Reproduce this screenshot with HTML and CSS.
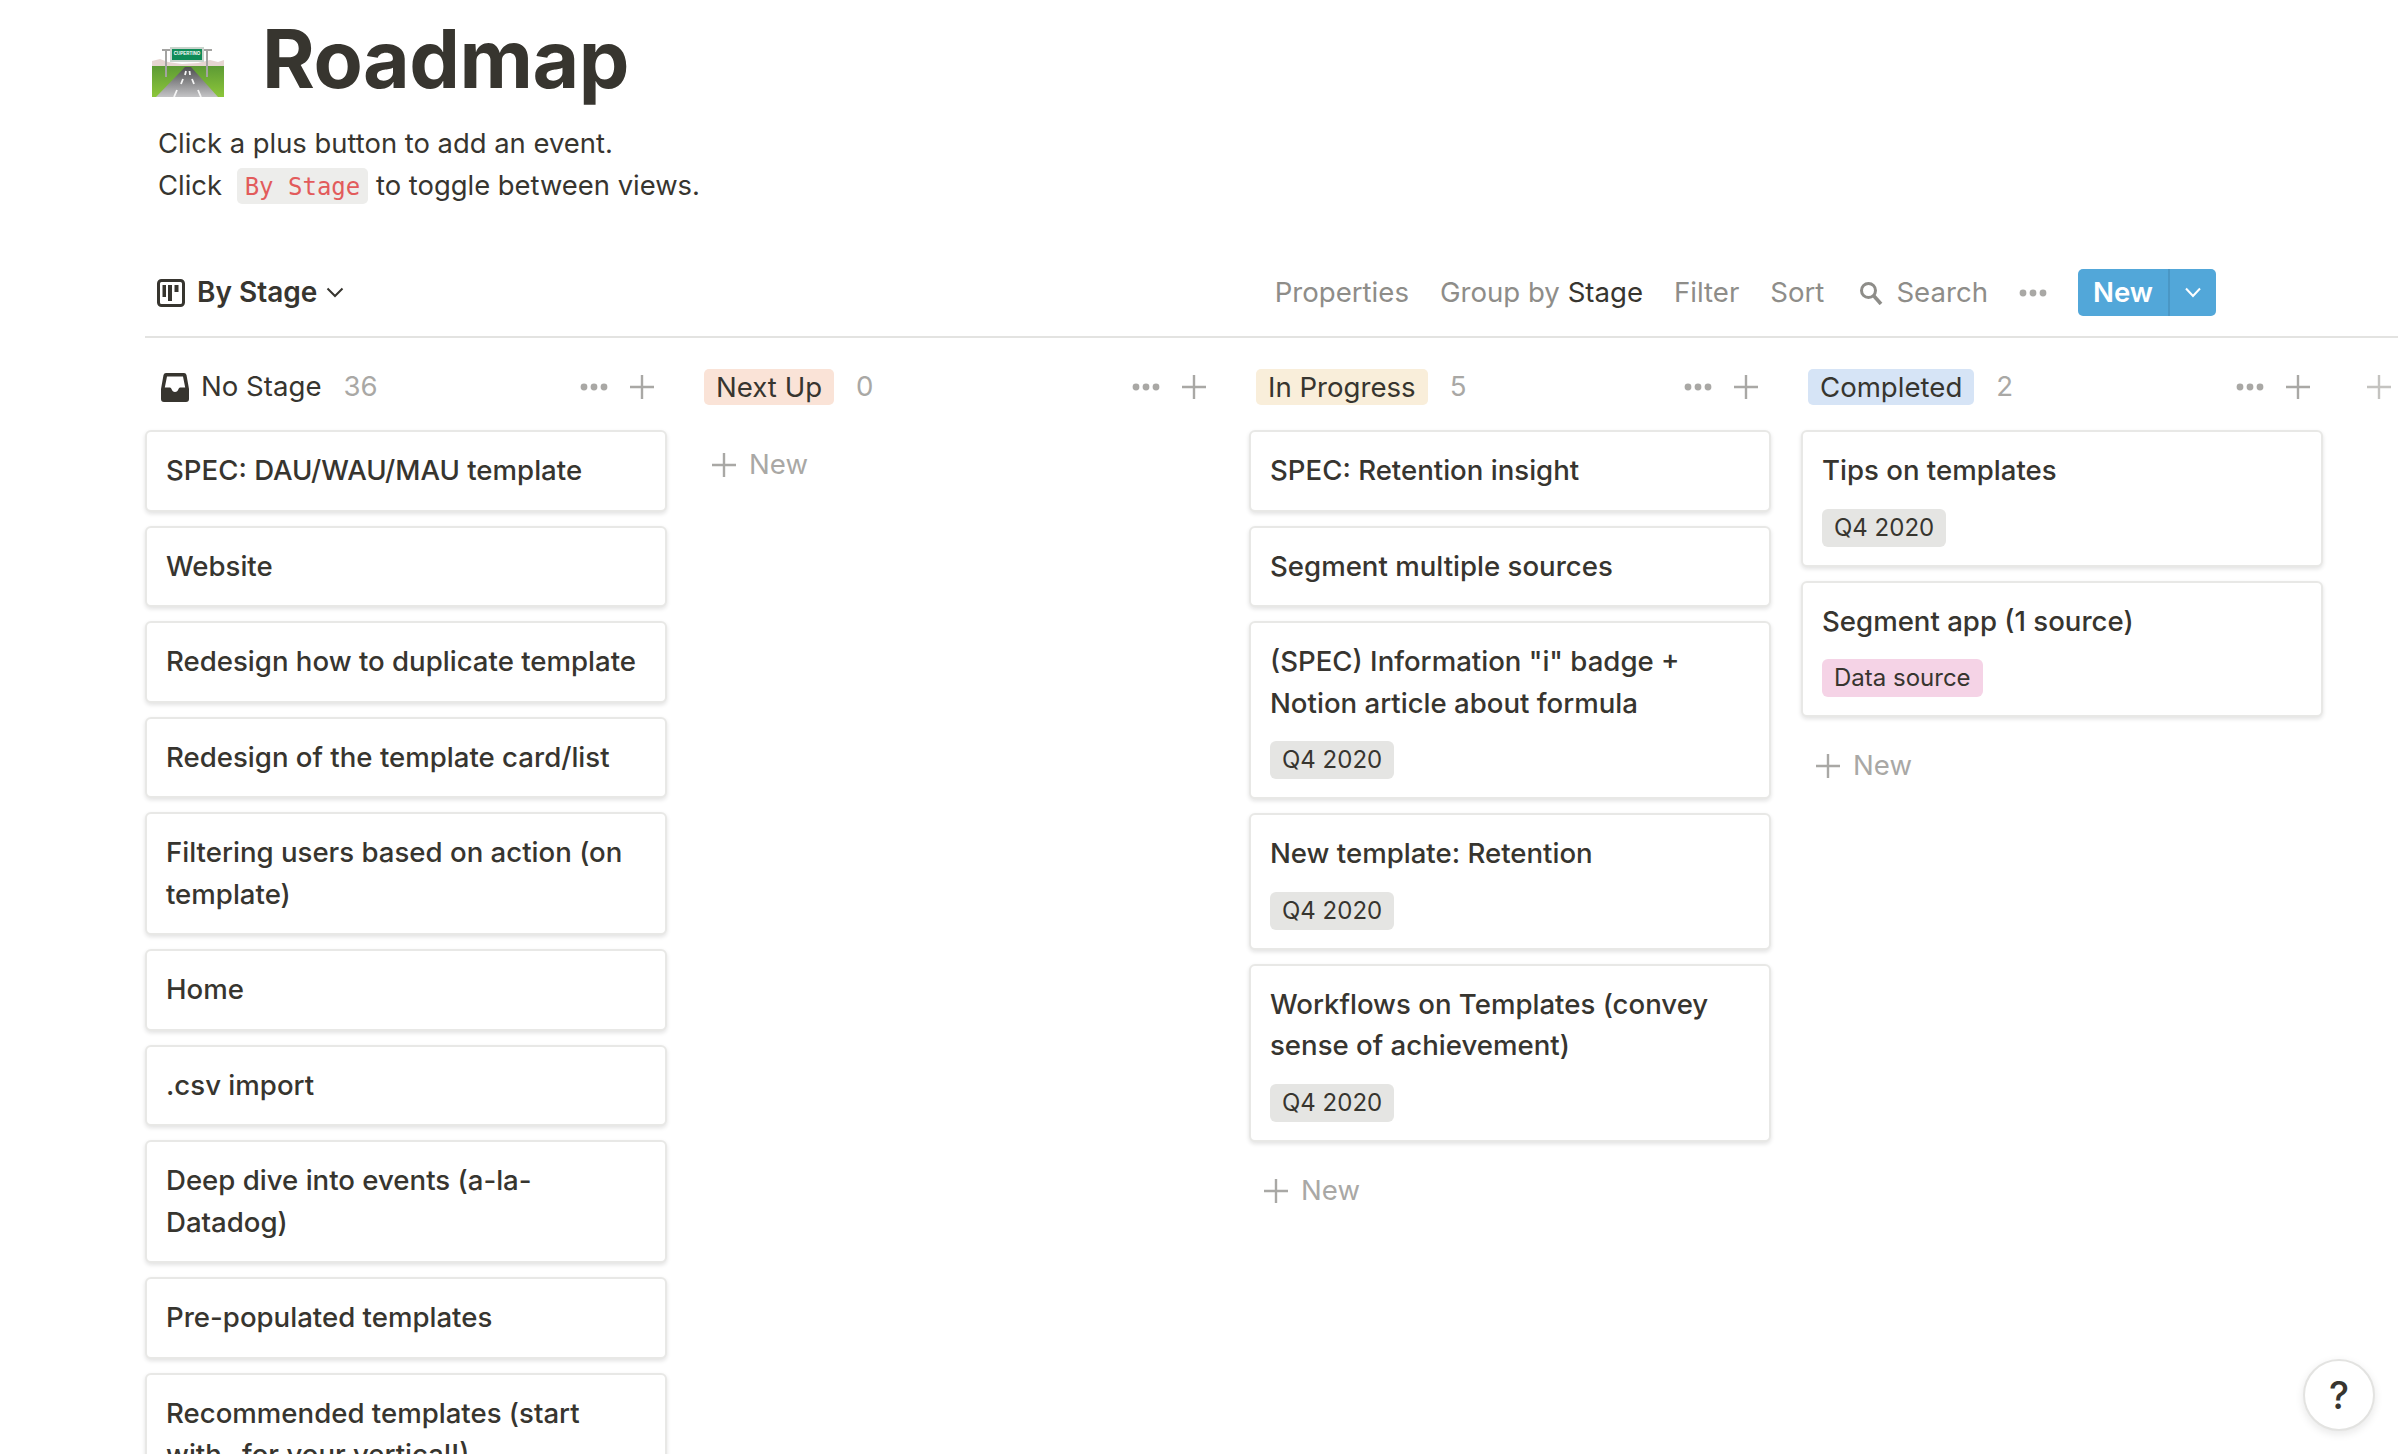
FILE: index.html
```html
<!DOCTYPE html>
<html lang="en">
<head>
    <meta charset="UTF-8">
    <title>Roadmap</title>
    <link rel="stylesheet" href="styles.css">
</head>
<body>
    <svg class="defs" width="0" height="0">
        <symbol id="dots" viewBox="0 0 28 8"><circle cx="4" cy="4" r="3.4"/><circle cx="14" cy="4" r="3.4"/><circle cx="24" cy="4" r="3.4"/></symbol>
        <symbol id="plus" viewBox="0 0 24 24"><path d="M0 12H24M12 0V24" fill="none" stroke="currentColor" stroke-width="2.4"/></symbol>
    </svg>

    <div class="page">
        <header class="title-row">
            <svg class="road-icon" viewBox="0 0 72 50">
                <defs>
                    <linearGradient id="roadFade" x1="0" y1="0" x2="0" y2="1">
                        <stop offset="0" stop-color="#4d4d4f"/>
                        <stop offset="1" stop-color="#c4c4c6"/>
                    </linearGradient>
                    <linearGradient id="grassFade" x1="0" y1="0" x2="0" y2="1">
                        <stop offset="0" stop-color="#5d9a34"/>
                        <stop offset="1" stop-color="#8cc63a"/>
                    </linearGradient>
                </defs>
                <path d="M0 14L8 12 16 15 30 17 46 16 58 13 66 15 72 13V20H0Z" fill="#e6d5d1"/>
                <rect x="0" y="19" width="72" height="31" fill="url(#grassFade)"/>
                <path d="M14 2V30M55 2V30M10 3H60" fill="none" stroke="#a3a3a1" stroke-width="2"/>
                <path d="M4 50L33 20H39L66 50Z" fill="url(#roadFade)"/>
                <path d="M22 50L25 43M29 37L31 32M33 28L34 24M49 50L46 43M42 37L40 32M38 28L37.500 24" stroke="#f5f5f5" stroke-width="1.800"/>
                <rect x="18" y="0" width="34" height="15" fill="#c9d4cc"/>
                <rect x="20" y="2" width="30" height="11" fill="#0f8c58"/>
                <text x="35" y="7.500" class="sign-text">CUPERTINO</text>
            </svg>
            <h1>Roadmap</h1>
        </header>

        <div class="intro">
            <div>Click a plus button to add an event.</div>
            <div>Click <code>By Stage</code> to toggle between views.</div>
        </div>

        <div class="toolbar">
            <div class="view-name">
                <svg class="board-icon" viewBox="0 0 28 28">
                    <rect x="1.500" y="1.500" width="25" height="25" rx="3" fill="none" stroke="currentColor" stroke-width="3"/>
                    <path d="M5.500 6H9V18H5.500ZM11 6H15V22H11ZM17.500 6H21.500V13H17.500Z" fill="currentColor"/>
                </svg>
                <span>By Stage</span>
                <svg class="chev" viewBox="0 0 18 11"><path d="M1.500 1.500L9 9 16.500 1.500" fill="none" stroke="currentColor" stroke-width="2"/></svg>
            </div>
            <div class="tools">
                <span>Properties</span>
                <span>Group by <b>Stage</b></span>
                <span>Filter</span>
                <span>Sort</span>
                <span class="search">
                    <svg viewBox="0 0 24 24"><circle cx="9.500" cy="9.500" r="7" fill="none" stroke="currentColor" stroke-width="3"/><path d="M14.500 14.500L22 23" stroke="currentColor" stroke-width="3.600"/></svg>
                    Search
                </span>
                <svg class="dots tool-dots"><use href="#dots"/></svg>
                <div class="new-btn">
                    <span class="new-label">New</span>
                    <span class="new-arrow"><svg viewBox="0 0 18 11"><path d="M2 1.500L9 9 16 1.500" fill="none" stroke="currentColor" stroke-width="2"/></svg></span>
                </div>
            </div>
        </div>

        <div class="board">
            <section class="column">
                <div class="col-head">
                    <svg class="tray" viewBox="0 0 28 30"><path d="M5 1H23Q25 1 25.500 3L28 17V27Q28 30 25 30H3Q0 30 0 27V17L2.500 3Q3 1 5 1ZM6 4.500L3.800 15.500H9Q10 15.500 10.500 17 11.500 20 14 20 16.500 20 17.500 17 18 15.500 19 15.500H24.200L22 4.500Z" fill="#37352f" fill-rule="evenodd"/></svg>
                    <span class="plain-name">No Stage</span>
                    <span class="count">36</span>
                    <span class="head-actions"><svg class="dots"><use href="#dots"/></svg><svg class="plus"><use href="#plus"/></svg></span>
                </div>
                <div class="card"><div class="card-title">SPEC: DAU/WAU/MAU template</div></div>
                <div class="card"><div class="card-title">Website</div></div>
                <div class="card"><div class="card-title">Redesign how to duplicate template</div></div>
                <div class="card"><div class="card-title">Redesign of the template card/list</div></div>
                <div class="card"><div class="card-title">Filtering users based on action (on template)</div></div>
                <div class="card"><div class="card-title">Home</div></div>
                <div class="card"><div class="card-title">.csv import</div></div>
                <div class="card"><div class="card-title">Deep dive into events (a-la-<br>Datadog)</div></div>
                <div class="card"><div class="card-title">Pre-populated templates</div></div>
                <div class="card"><div class="card-title">Recommended templates (start<br>with _for your vertical!)</div></div>
            </section>

            <section class="column">
                <div class="col-head">
                    <span class="pill pill-orange">Next Up</span>
                    <span class="count">0</span>
                    <span class="head-actions"><svg class="dots"><use href="#dots"/></svg><svg class="plus"><use href="#plus"/></svg></span>
                </div>
                <div class="add-new first"><svg class="plus"><use href="#plus"/></svg>New</div>
            </section>

            <section class="column">
                <div class="col-head">
                    <span class="pill pill-yellow">In Progress</span>
                    <span class="count">5</span>
                    <span class="head-actions"><svg class="dots"><use href="#dots"/></svg><svg class="plus"><use href="#plus"/></svg></span>
                </div>
                <div class="card"><div class="card-title">SPEC: Retention insight</div></div>
                <div class="card"><div class="card-title">Segment multiple sources</div></div>
                <div class="card"><div class="card-title">(SPEC) Information "i" badge + Notion article about formula</div><span class="tag">Q4 2020</span></div>
                <div class="card"><div class="card-title">New template: Retention</div><span class="tag">Q4 2020</span></div>
                <div class="card"><div class="card-title">Workflows on Templates (convey sense of achievement)</div><span class="tag">Q4 2020</span></div>
                <div class="add-new"><svg class="plus"><use href="#plus"/></svg>New</div>
            </section>

            <section class="column">
                <div class="col-head">
                    <span class="pill pill-blue">Completed</span>
                    <span class="count">2</span>
                    <span class="head-actions"><svg class="dots"><use href="#dots"/></svg><svg class="plus"><use href="#plus"/></svg></span>
                </div>
                <div class="card"><div class="card-title">Tips on templates</div><span class="tag">Q4 2020</span></div>
                <div class="card"><div class="card-title">Segment app (1 source)</div><span class="tag tag-pink">Data source</span></div>
                <div class="add-new"><svg class="plus"><use href="#plus"/></svg>New</div>
            </section>

            <div class="add-group"><svg class="plus"><use href="#plus"/></svg></div>
        </div>
    </div>

    <div class="help">?</div>
</body>
</html>
```

FILE: styles.css
```css
html, body {
    height: 100%;
    margin: 0;
    overflow: hidden;
}
body {
    background: #fff;
    color: #37352f;
    font-family: Inter, "Liberation Sans", sans-serif;
    font-size: 27.6px;
    line-height: 41.5px;
}
.defs {
    position: absolute;
}
.page {
    padding-left: 145px;
    height: 1454px;
    overflow: hidden;
}

/* title */
.title-row {
    display: flex;
    align-items: flex-start;
    height: 122px;
}
.road-icon {
    width: 72px;
    height: 50px;
    margin: 47px 0 0 7px;
    flex: none;
}
.sign-text {
    font-size: 4.500px;
    fill: #fff;
    text-anchor: middle;
    font-family: "Liberation Sans", sans-serif;
    font-weight: 700;
}
h1 {
    margin: 14px 0 0 38px;
    font-size: 80.5px;
    line-height: 90px;
    font-weight: 700;
    letter-spacing: -0.5px;
}
.intro {
    padding-left: 13px;
    height: 84px;
    font-size: 27.4px;
    line-height: 42px;
}
code {
    display: inline-block;
    height: 36px;
    line-height: 38px;
    margin: 4px 0 0 7px;
    padding: 0 8px;
    vertical-align: top;
    background: #ededeb;
    border-radius: 5px;
    color: #e25b5b;
    font-family: "DejaVu Sans Mono", monospace;
    font-size: 24px;
}

/* toolbar */
.toolbar {
    display: flex;
    align-items: center;
    justify-content: space-between;
    height: 84px;
    margin-top: 48px;
    padding: 0 182px 5px 12px;
    border-bottom: 2px solid #e3e3e1;
    box-sizing: border-box;
}
.view-name {
    display: flex;
    align-items: center;
    font-size: 28px;
    font-weight: 600;
}
.board-icon {
    width: 28px;
    height: 28px;
    margin-right: 12px;
}
.chev {
    width: 18px;
    height: 11px;
    margin-left: 9px;
}
.tools {
    display: flex;
    align-items: center;
    gap: 31px;
    color: #8e8d89;
}
.tools b {
    font-weight: 400;
    color: #37352f;
}
.search {
    display: flex;
    align-items: center;
    margin-left: 4px;
}
.search svg {
    width: 24px;
    height: 24px;
    margin-right: 13px;
}
.dots {
    width: 28px;
    height: 8px;
    fill: #a9a8a5;
}
.new-btn {
    display: flex;
    height: 47px;
    line-height: 46px;
    background: #52a7d9;
    border-radius: 5px;
    color: #fff;
    font-weight: 600;
}
.new-label {
    padding: 0 15px;
    border-right: 2px solid #4a97c5;
}
.new-arrow {
    display: flex;
    align-items: center;
    justify-content: center;
    width: 46px;
}
.new-arrow svg {
    width: 18px;
    height: 11px;
}

/* board */
.board {
    display: flex;
    gap: 30px;
    padding-top: 1px;
}
.column {
    flex: none;
    width: 522px;
}
.col-head {
    display: flex;
    align-items: center;
    height: 46px;
    margin: 25px 0 20px;
    padding: 0 13px 0 7px;
}
.tray {
    width: 28px;
    height: 30px;
    margin: 0 12px 0 9px;
}
.count {
    margin-left: 22px;
    color: #a9a8a5;
}
.pill {
    height: 36px;
    line-height: 36px;
    padding: 0 12px;
    border-radius: 5px;
}
.pill-orange { background: #fae3d7; }
.pill-yellow { background: #f9eeda; }
.pill-blue { background: #d6e4f6; }
.head-actions {
    display: flex;
    align-items: center;
    gap: 22px;
    margin-left: auto;
}
.plus {
    width: 24px;
    height: 24px;
    color: #a9a8a5;
}
.card {
    margin-bottom: 14px;
    padding: 18px 19px;
    background: #fff;
    border: 2px solid #e8e8e6;
    border-radius: 6px;
    box-shadow: 0 2px 4px rgba(15, 15, 15, 0.12);
}
.card-title {
    font-weight: 500;
}
.tag {
    display: inline-block;
    height: 38px;
    line-height: 38px;
    margin-top: 17px;
    padding: 0 12px;
    background: #e5e5e3;
    border-radius: 6px;
    font-size: 24px;
    vertical-align: top;
}
.tag-pink {
    background: #f5d3e6;
}
.add-new {
    display: flex;
    align-items: center;
    gap: 13px;
    height: 46px;
    padding-left: 15px;
    margin-top: 26px;
    color: #a9a8a5;
}
.add-new.first {
    margin-top: 32px;
}
.add-group {
    flex: none;
    margin-left: 14px;
    padding-top: 25px;
    height: 46px;
    display: flex;
    align-items: center;
}
.add-group .plus {
    color: #c4c3c0;
}

/* help button stays over the page */
.help {
    position: absolute;
    left: 2303px;
    top: 1359px;
    width: 72px;
    height: 72px;
    box-sizing: border-box;
    border: 2px solid #e3e3e1;
    border-radius: 50%;
    background: #fff;
    box-shadow: 0 3px 8px rgba(15, 15, 15, 0.1);
    text-align: center;
    line-height: 68px;
    font-size: 38px;
    font-weight: 500;
}
```
